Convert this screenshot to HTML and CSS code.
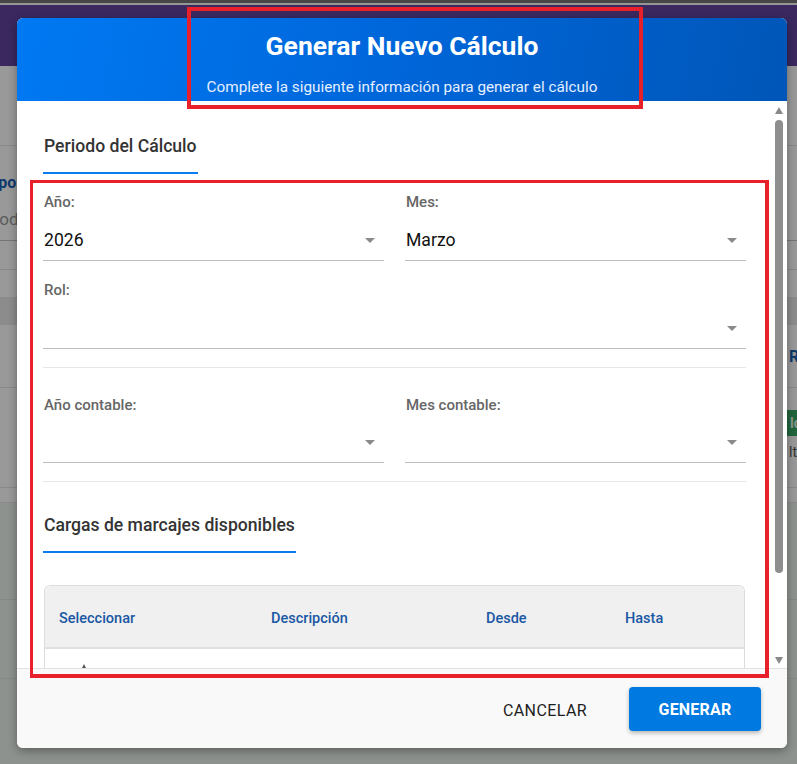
FILE: index.html
```html
<!DOCTYPE html>
<html lang="es">
<head>
<meta charset="utf-8">
<title>Generar Nuevo Cálculo</title>
<link rel="stylesheet" href="styles.css">
</head>
<body>
<div class="page">
  <div class="page-top"></div>
  <div class="page-header"></div>
  <div class="pg-row r1"></div>
  <div class="pg-row r2">
    <span class="pg-label">Tipo:</span>
    <span class="pg-input">Todos</span>
  </div>
  <div class="pg-row r3"></div>
  <div class="pg-row r4"></div>
  <div class="pg-row r4b"></div>
  <div class="pg-row r5"><span class="pg-link">R</span></div>
  <div class="pg-row r6"><span class="pg-badge">lo</span><span class="pg-small">lta</span></div>
  <div class="pg-row r7"></div>
  <div class="pg-rest">
    <div class="pg-rest-row a"></div>
    <div class="pg-rest-row b"></div>
  </div>
</div>
<div class="backdrop"></div>

<div class="dialog">
  <div class="dlg-header">
    <h1 class="dlg-title">Generar Nuevo Cálculo</h1>
    <p class="dlg-sub">Complete la siguiente información para generar el cálculo</p>
  </div>
  <div class="dlg-body">
    <div class="dlg-content">
      <div class="tab-wrap"><span class="tab">Periodo del Cálculo</span></div>
      <div class="grid2 first">
        <div class="field">
          <div class="label">Año:</div>
          <div class="select"><span class="value">2026</span><i class="caret"></i></div>
        </div>
        <div class="field">
          <div class="label">Mes:</div>
          <div class="select"><span class="value">Marzo</span><i class="caret"></i></div>
        </div>
      </div>
      <div class="field rol">
        <div class="label">Rol:</div>
        <div class="select"><span class="value"></span><i class="caret"></i></div>
      </div>
      <div class="sep"></div>
      <div class="grid2 second">
        <div class="field">
          <div class="label">Año contable:</div>
          <div class="select"><span class="value"></span><i class="caret"></i></div>
        </div>
        <div class="field">
          <div class="label">Mes contable:</div>
          <div class="select"><span class="value"></span><i class="caret"></i></div>
        </div>
      </div>
      <div class="sep"></div>
      <div class="tab-wrap second"><span class="tab">Cargas de marcajes disponibles</span></div>
      <div class="table">
        <div class="thead">
          <span>Seleccionar</span>
          <span>Descripción</span>
          <span>Desde</span>
          <span>Hasta</span>
        </div>
        <div class="tbody"><i class="sort"></i></div>
      </div>
    </div>
    <div class="scrollbar">
      <svg class="sb-arrow up" width="8" height="7" viewBox="0 0 8 7"><path d="M4 0 L8 7 L0 7 Z" fill="#898989"/></svg>
      <div class="sb-thumb"></div>
      <svg class="sb-arrow down" width="8" height="7" viewBox="0 0 8 7"><path d="M0 0 L8 0 L4 7 Z" fill="#898989"/></svg>
    </div>
  </div>
  <div class="dlg-footer">
    <button class="btn-text">CANCELAR</button>
    <button class="btn-primary">GENERAR</button>
  </div>
</div>

<div class="annot annot-1"></div>
<div class="annot annot-2"></div>
</body>
</html>
```

FILE: styles.css
```css
* { box-sizing: border-box; }
html, body { margin: 0; padding: 0; }
body {
  width: 797px;
  height: 764px;
  overflow: hidden;
  position: relative;
  background: #fff;
  font-family: Roboto, "Noto Sans", Arial, sans-serif;
}

/* ---------- page behind the modal ---------- */
.page {
  width: 797px;
  height: 764px;
  display: flex;
  flex-direction: column;
  background: #fff;
  overflow: hidden;
}
.page-top { height: 5px; flex: none; background: #757575; border-bottom: 2px solid #fafafa; }
.page-header { height: 61px; flex: none; background: #62439e; }
.pg-row { flex: none; border-bottom: 1px solid #e4e4e4; }
.r1 { height: 80px; }
.r2 {
  height: 95px;
  display: flex;
  flex-direction: column;
  border-bottom-color: #c4c4c4;
  padding-top: 25px;
}
.pg-label { font-weight: 700; font-size: 16px; color: #1a5fb4; margin-left: -16px; line-height: 24px; }
.pg-input { font-size: 17px; color: #9a9a9a; margin-left: -10px; line-height: 24px; margin-top: 12px; }
.r3 { height: 29px; }
.r4 { height: 27px; border-bottom: none; }
.r4b { height: 28px; background: #e9e9ec; border-bottom: none; }
.r5 { height: 63px; display: flex; align-items: center; padding-left: 789px; }
.pg-link { font-weight: 700; font-size: 16px; color: #1a5fb4; }
.r6 { height: 100px; display: flex; flex-direction: column; padding-left: 787px; padding-top: 22px; }
.pg-badge { display: block; width: 40px; height: 26px; background: #37a864; color: #eaffea; font-size: 14px; line-height: 26px; padding-left: 3px; font-weight: 700; }
.pg-small { font-size: 14px; color: #555; margin-top: 8px; padding-left: 2px; }
.r7 { height: 15px; }
.pg-rest { flex: 1; background: #edf3ed; }
.pg-rest-row { border-bottom: 1px solid #dfe5df; }
.pg-rest-row.a { height: 97px; }
.pg-rest-row.b { height: 79px; }

.backdrop {
  position: absolute;
  inset: 0;
  background: rgba(0, 0, 0, 0.4);
}

/* ---------- dialog ---------- */
.dialog {
  position: absolute;
  left: 17px;
  top: 18px;
  width: 770px;
  height: 730px;
  background: #fff;
  border-radius: 6px;
  overflow: hidden;
  display: flex;
  flex-direction: column;
  box-shadow: 0 3px 10px rgba(0, 0, 0, 0.35);
}
.dlg-header {
  height: 83px;
  flex: none;
  background: linear-gradient(100deg, #0079f2 0%, #0066d9 50%, #0056b8 100%);
  color: #fff;
  text-align: center;
  padding-top: 12px;
}
.dlg-title {
  margin: 0;
  font-size: 26.5px;
  line-height: 32px;
  font-weight: 700;
}
.dlg-sub {
  margin: 15px 0 0;
  font-size: 15.3px;
  line-height: 20px;
  font-weight: 400;
  color: #e6f0ff;
}

.dlg-body {
  flex: 1;
  min-height: 0;
  display: flex;
}
.dlg-content {
  flex: 1;
  min-width: 0;
  overflow: hidden;
  padding: 33px 26px 32px 27px;
}

.scrollbar {
  width: 15px;
  flex: none;
  display: flex;
  flex-direction: column;
  align-items: flex-start;
  padding: 6px 0 4px 3px;
  background: #fff;
}
.sb-arrow { display: block; flex: none; }
.sb-thumb {
  width: 8px;
  height: 453px;
  margin-top: 6px;
  border-radius: 4px;
  background: #8e8e8e;
}
.sb-arrow.down { margin-top: auto; }

.tab-wrap { display: flex; }
.tab {
  display: block;
  font-size: 17.6px;
  line-height: 24px;
  font-weight: 500;
  color: #333;
  padding-bottom: 14px;
  border-bottom: 2px solid #0a7cee;
  margin-left: -1px;
  padding-left: 1px;
  padding-right: 1px;
}
.tab-wrap.second { margin-top: 31px; }

.grid2 {
  display: grid;
  grid-template-columns: 1fr 1fr;
  column-gap: 22px;
}
.grid2.first { margin-top: 18px; }
.grid2.second { margin-top: 27px; }
.field.rol { margin-top: 19px; }

.label {
  font-size: 15px;
  line-height: 20px;
  font-weight: 500;
  color: #666;
}
.select {
  height: 49px;
  padding-top: 16px;
  border-bottom: 1px solid #bdbdbd;
  display: flex;
  align-items: flex-start;
  justify-content: space-between;
  margin-left: -1px;
}
.grid2.second .select { height: 48px; padding-top: 15px; }
.value {
  font-size: 17.6px;
  line-height: 24px;
  color: #111;
  padding-left: 1px;
}
.caret {
  display: block;
  width: 0;
  height: 0;
  border-left: 5px solid transparent;
  border-right: 5px solid transparent;
  border-top: 5px solid #8a8a8a;
  margin-top: 10px;
  margin-right: 9px;
}

.sep {
  height: 1px;
  background: #e6e6e6;
  margin-top: 18px;
  margin-left: -1px;
}

.table {
  margin-top: 32px;
  border: 1px solid #dcdcdc;
  border-bottom: none;
  border-radius: 6px 6px 0 0;
  margin-right: 1px;
}
.thead {
  height: 63px;
  background: #f0f0f0;
  border-bottom: 2px solid #e0e0e0;
  border-radius: 6px 6px 0 0;
  display: grid;
  grid-template-columns: 212px 215px 139px 1fr;
  align-items: center;
  padding-left: 14px;
  padding-top: 3px;
  font-size: 14.5px;
  font-weight: 500;
  color: #1b58a4;
}
.tbody {
  height: 80px;
  padding-top: 15px;
  padding-left: 37px;
}
.sort {
  display: block;
  width: 0;
  height: 0;
  border-left: 2.5px solid transparent;
  border-right: 2.5px solid transparent;
  border-bottom: 4px solid #555;
}

.dlg-footer {
  height: 80px;
  flex: none;
  background: #f9f9f9;
  border-top: 1px solid #e2e2e2;
  display: flex;
  align-items: center;
  justify-content: flex-end;
  gap: 26px;
  padding-right: 26px;
}
.btn-text {
  border: none;
  background: transparent;
  font-family: Roboto, "Noto Sans", Arial, sans-serif;
  font-size: 16px;
  letter-spacing: 0.4px;
  color: #1e1e1e;
  padding: 3px 16px 0;
  height: 44px;
}
.btn-primary {
  border: none;
  width: 132px;
  height: 44px;
  border-radius: 4px;
  background: #0079e0;
  color: #fff;
  font-family: Roboto, "Noto Sans", Arial, sans-serif;
  font-size: 16px;
  font-weight: 700;
  letter-spacing: 0.2px;
  padding-top: 3px;
  box-shadow: 0 2px 4px rgba(0, 0, 0, 0.28);
}

/* ---------- red annotation frames over the screenshot ---------- */
.annot {
  position: absolute;
  border: 4px solid #e8202a;
  pointer-events: none;
}
.annot-1 { left: 187px; top: 7px; width: 456px; height: 102px; }
.annot-2 { left: 30px; top: 180px; width: 739px; height: 498px; border-width: 3.5px 4px 4px 3.5px; }
```
